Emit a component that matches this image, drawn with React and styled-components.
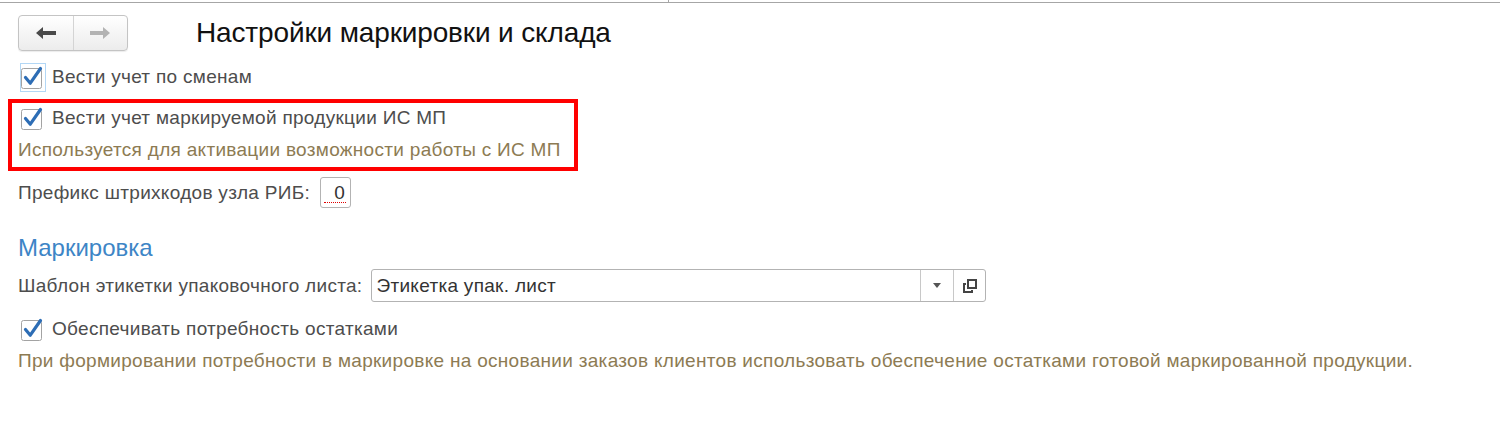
import React from "react";
import styled, { createGlobalStyle } from "styled-components";

const Global = createGlobalStyle`
  html, body { margin: 0; padding: 0; background: #fff; }
  body { font-family: "Liberation Sans", Arial, sans-serif; color: #4d4d4d; }
`;

const Page = styled.div`
  width: 1500px;
  height: 432px;
  overflow: hidden;
  background: #fff;
  font-size: 19px;
  letter-spacing: 0.3px;
`;

const TopStrip = styled.div`
  display: flex;
  height: 2px;
  border-bottom: 1px solid #a6a6a6;
`;

const TopSegment = styled.div`
  width: ${(p) => p.$w}px;
  border-right: 1px solid #a6a6a6;
`;

const Header = styled.div`
  display: flex;
  align-items: center;
  padding: 12px 0 0 18px;
  height: 36px;
`;

const NavGroup = styled.div`
  display: flex;
  width: 110px;
  height: 36px;
  box-sizing: border-box;
  border: 1px solid #c4c4c4;
  border-radius: 4px;
  background: linear-gradient(#ffffff, #ececec);
  box-shadow: 0 1px 1px rgba(0, 0, 0, 0.08);
`;

const NavButton = styled.div`
  flex: 1;
  display: flex;
  align-items: center;
  justify-content: center;
  & + & { border-left: 1px solid #d4d4d4; }
`;

const Title = styled.h1`
  margin: 0 0 0 68px;
  font-weight: normal;
  font-size: 28px;
  letter-spacing: -0.14px;
  color: #111;
  line-height: 36px;
`;

const Content = styled.div`
  display: flex;
  flex-direction: column;
  align-items: flex-start;
  padding-left: 18px;
`;

const CheckRow = styled.div`
  display: flex;
  align-items: center;
  height: ${(p) => p.$h || 30}px;
  margin-top: ${(p) => p.$mt || 0}px;
`;

const CheckWrap = styled.div`
  width: 26px;
  height: 29px;
  box-sizing: border-box;
  margin-left: 2px;
  border: 1px solid ${(p) => (p.$focused ? "#b3d7f5" : "transparent")};
  display: flex;
  align-items: center;
  justify-content: flex-start;
`;

const Label = styled.span`
  margin-left: 6px;
  white-space: nowrap;
`;

const Highlight = styled.div`
  margin-left: -10px;
  margin-top: 7px;
  border: 4px solid #ff0000;
  padding: 0 13px 0 6px;
  display: flex;
  flex-direction: column;
  align-items: flex-start;
`;

const Hint = styled.div`
  color: #8d7b53;
  white-space: nowrap;
  line-height: ${(p) => p.$lh || 30}px;
  margin-top: ${(p) => p.$mt || 0}px;
`;

const FieldRow = styled.div`
  display: flex;
  align-items: center;
  margin-top: ${(p) => p.$mt || 0}px;
  white-space: nowrap;
`;

const FieldLabel = styled.span`
  margin-right: ${(p) => p.$gap || 8}px;
`;

const SmallInput = styled.div`
  position: relative;
  width: 31px;
  height: 31px;
  box-sizing: border-box;
  border: 1px solid #b3b3b3;
  border-radius: 3px;
  display: flex;
  align-items: center;
  justify-content: flex-end;
  padding-right: 5px;
  color: #333;
`;

const DottedLine = styled.div`
  position: absolute;
  left: 3px;
  right: 4px;
  bottom: 4px;
  border-bottom: 1px dotted #e00000;
`;

const SectionTitle = styled.div`
  font-size: 24px;
  letter-spacing: 0;
  color: #3d85c6;
  margin-top: 25px;
  line-height: 30px;
`;

const Select = styled.div`
  display: flex;
  width: 615px;
  height: 33px;
  box-sizing: border-box;
  border: 1px solid #b3b3b3;
  border-radius: 3px;
`;

const SelectText = styled.div`
  flex: 1;
  display: flex;
  align-items: center;
  padding-left: 4px;
  color: #333;
`;

const SelectBtn = styled.div`
  width: ${(p) => p.$w}px;
  display: flex;
  align-items: center;
  justify-content: center;
  border-left: 1px solid #c8c8c8;
`;

const CheckBox = () => (
  <svg width="24" height="24" viewBox="0 0 24 24">
    <rect x="0.5" y="3.5" width="20" height="20" rx="2" fill="#fff" stroke="#a3a3a3" />
    <path d="M4.5 12.5 L9.3 18.2 L19.5 3.5" fill="none" stroke="#2d6db5" strokeWidth="3.2" strokeLinecap="round" strokeLinejoin="round" />
  </svg>
);

const ArrowLeft = ({ color }) => (
  <svg width="22" height="14" viewBox="0 0 22 14">
    <path d="M1 7 L8 1 L8 5 L21 5 L21 9 L8 9 L8 13 Z" fill={color} />
  </svg>
);

const ArrowRight = ({ color }) => (
  <svg width="22" height="14" viewBox="0 0 22 14">
    <path d="M21 7 L14 1 L14 5 L1 5 L1 9 L14 9 L14 13 Z" fill={color} />
  </svg>
);

const Triangle = () => (
  <svg width="8" height="5" viewBox="0 0 8 5">
    <path d="M0 0 L8 0 L4 5 Z" fill="#555" />
  </svg>
);

const OpenIcon = () => (
  <svg width="14" height="14" viewBox="0 0 14 14">
    <rect x="5" y="1" width="8" height="8" fill="none" stroke="#444" strokeWidth="2" />
    <path d="M3 5 L1 5 L1 13 L9 13 L9 11" fill="none" stroke="#444" strokeWidth="2" />
  </svg>
);

export default function App() {
  return (
    <Page>
      <Global />
      <TopStrip>
        <TopSegment $w={668} />
      </TopStrip>
      <Header>
        <NavGroup>
          <NavButton><ArrowLeft color="#4a4a4a" /></NavButton>
          <NavButton><ArrowRight color="#b3b3b3" /></NavButton>
        </NavGroup>
        <Title>Настройки маркировки и склада</Title>
      </Header>
      <Content>
        <CheckRow $mt={11} $h={30}>
          <CheckWrap $focused><CheckBox /></CheckWrap>
          <Label>Вести учет по сменам</Label>
        </CheckRow>
        <Highlight>
          <CheckRow $h={30}>
            <CheckWrap><CheckBox /></CheckWrap>
            <Label>Вести учет маркируемой продукции ИС МП</Label>
          </CheckRow>
          <Hint $lh={34}>Используется для активации возможности работы с ИС МП</Hint>
        </Highlight>
        <FieldRow $mt={6}>
          <FieldLabel $gap={10}>Префикс штрихкодов узла РИБ:</FieldLabel>
          <SmallInput>0<DottedLine /></SmallInput>
        </FieldRow>
        <SectionTitle>Маркировка</SectionTitle>
        <FieldRow $mt={6}>
          <FieldLabel $gap={9}>Шаблон этикетки упаковочного листа:</FieldLabel>
          <Select>
            <SelectText>Этикетка упак. лист</SelectText>
            <SelectBtn $w={32}><Triangle /></SelectBtn>
            <SelectBtn $w={31}><OpenIcon /></SelectBtn>
          </Select>
        </FieldRow>
        <CheckRow $mt={12} $h={30}>
          <CheckWrap><CheckBox /></CheckWrap>
          <Label>Обеспечивать потребность остатками</Label>
        </CheckRow>
        <Hint $mt={2}>При формировании потребности в маркировке на основании заказов клиентов использовать обеспечение остатками готовой маркированной продукции.</Hint>
      </Content>
    </Page>
  );
}
